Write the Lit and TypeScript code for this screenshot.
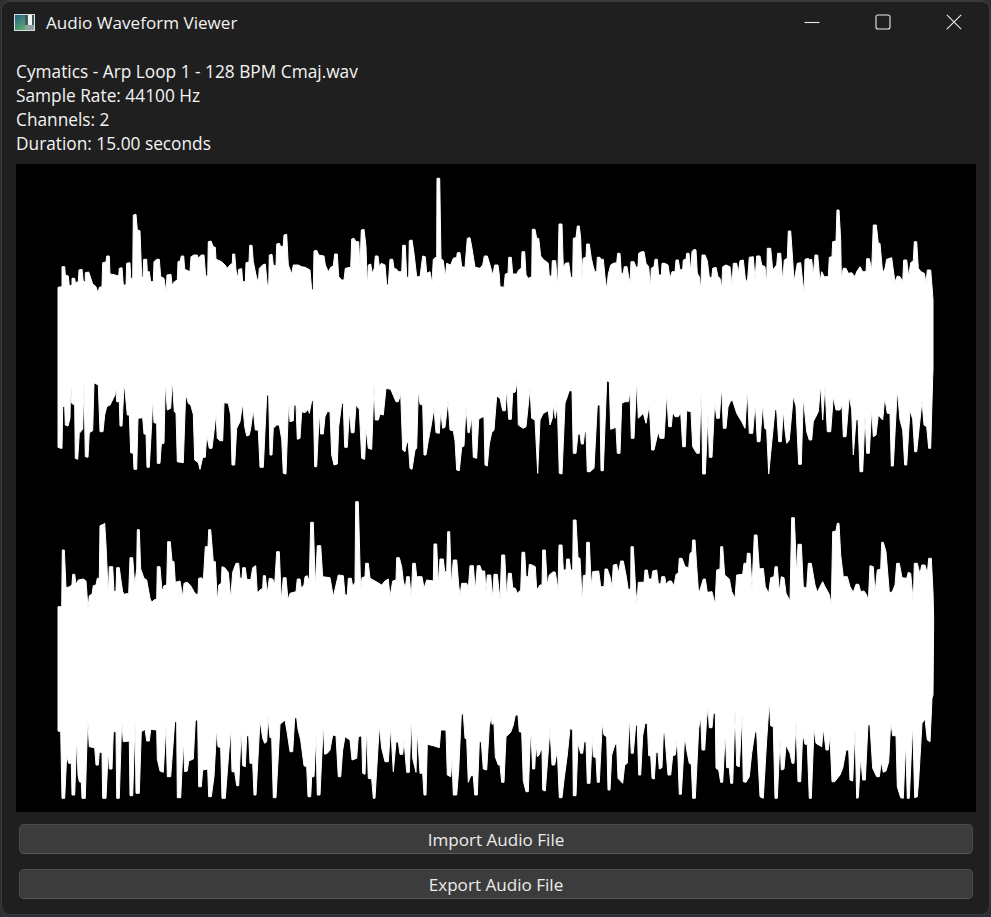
import { LitElement, css, html, svg } from 'lit';
import { customElement } from 'lit/decorators.js';

// envelope traces, in 3x coordinates relative to the crop origin given in build()
const CH1_TOP_A =
  '54,390 54,352 66,350 66,290 74,290 76,315 85,318 88,348 96,345 96,325 104,325 106,338 115,335 117,300 126,298 130,335 136,335 136,308 146,306 158,342 168,350 174,370 178,352 186,350 188,278 198,276 200,258 208,258 210,312 222,314 236,318 238,295 246,293 250,345 258,345 260,280 270,278 272,325 278,325 280,135 288,133 292,180 300,182 305,320 309,322 311,268 320,268 322,305 328,305 332,335 340,335 342,275 350,268 358,268 362,320 372,325 378,366 381,315 393,313 396,345 403,335 412,330 414,275 421,272 424,258 431,258 434,298 450,305 453,260 462,255 472,255 475,265 484,255 492,255 497,318 503,318 505,215 513,213 520,230 526,232 528,268 545,275 555,285 562,295 570,285 577,280 578,252 584,252 588,300 593,325 596,298 605,296 608,335 616,335 618,278 627,276 629,226 636,226 640,275 648,315 655,340 658,295 668,285 676,282 682,345 686,345 688,255 696,253 700,285 708,288 710,222 718,220 722,230 730,228 732,195 740,193 745,285 755,312 760,285 775,285 785,290 795,292 810,300 815,360 820,360 822,243 830,241 836,255 852,258 856,285 865,305 872,292 880,288 884,252 892,252 896,320 905,330 912,330 916,295 932,292 935,207 942,205 948,215 956,215 960,290 964,180 972,178 978,230 982,355 985,285 992,282 997,310 1003,295 1006,258 1014,258 1018,290 1024,280 1035,285 1040,345 1045,345 1050,268 1058,268 1062,295 1070,298 1076,305 1085,305 1088,226 1096,226 1100,322 1106,322 1108,212 1116,210 1122,250 1130,320 1140,320 1148,258 1156,260 1160,310 1170,305 1176,340 1180,268 1190,260 1191,25 1199,25 1203,265 1210,272 1216,322 1220,280 1232,285 1240,265 1250,262 1252,248 1260,248 1265,290 1275,292 1282,205 1290,203 1296,235 1305,292 1320,295 1328,285 1333,258 1342,258 1350,285 1358,315 1364,285 1374,285 1378,315';
const CH1_TOP_B =
  '30,350 42,352 46,312 54,310 56,262 64,262 68,312 80,312 86,300 94,295 96,245 104,245 108,315 115,325 125,320 127,178 135,178 140,205 146,205 152,258 160,268 175,280 178,318 185,318 187,272 197,272 203,352 207,162 216,162 220,295 226,280 236,278 242,322 248,322 250,205 258,203 262,168 268,168 272,205 276,325 279,265 288,262 290,222 298,222 304,265 310,290 314,305 320,305 322,262 330,262 332,268 340,268 345,320 350,358 355,312 362,285 370,280 380,278 383,250 390,250 394,310 400,310 403,290 411,290 416,320 420,338 423,275 432,275 438,292 444,290 446,250 455,245 462,245 468,280 476,290 481,355 484,295 492,290 495,268 502,268 506,315 514,315 516,280 524,280 534,285 540,325 546,305 555,305 558,270 565,270 570,300 578,298 580,270 588,268 590,250 597,250 602,305 606,245 612,238 618,240 622,310 628,320 632,360 636,255 645,255 652,272 658,320 665,325 668,295 678,292 684,320 690,325 695,355 698,290 708,285 720,290 726,345 730,280 740,280 745,308 750,272 760,270 766,325 772,340 778,262 790,260 795,330 800,258 810,258 815,285 825,290 830,342 832,235 842,235 848,300 860,285 863,250 872,250 878,335 883,270 892,265 895,183 902,183 908,270 912,335 922,280 932,278 938,335 942,368 945,268 955,265 958,270 965,268 970,315 975,255 983,255 990,335 995,305 1003,320 1015,320 1018,262 1026,260 1028,215 1038,213 1041,120 1047,120 1052,210 1054,322 1060,295 1068,295 1075,310 1085,308 1095,320 1100,305 1110,290 1118,305 1128,305 1130,266 1138,266 1145,300 1150,165 1159,165 1165,220 1170,220 1178,310 1185,295 1190,268 1205,263 1210,300 1215,335 1222,318 1230,320 1238,335 1241,270 1250,270 1256,320 1262,278 1270,272 1273,215 1280,215 1285,295 1293,305 1303,310 1308,338 1312,300 1322,300 1327,360 1329,390';
const CH1_BOT_A =
  '54,0 54,232 62,235 66,235 68,110 74,108 76,165 84,168 90,145 92,28 95,100 104,105 106,265 113,268 118,190 128,178 132,35 136,260 144,262 148,188 158,182 162,38 175,45 180,185 189,185 194,135 200,110 210,105 225,75 227,45 230,95 238,95 240,168 246,168 252,45 255,60 262,135 268,135 272,248 280,250 282,298 290,298 294,145 308,143 312,192 318,192 321,292 328,292 335,160 338,82 342,158 350,160 352,280 360,280 364,222 372,220 376,35 382,120 392,115 397,28 403,125 408,128 412,275 430,278 437,70 445,100 452,105 460,133 464,270 475,278 480,298 488,262 496,262 500,195 508,235 516,235 522,185 528,130 532,205 540,212 548,212 552,98 565,100 572,135 576,285 584,285 590,175 600,155 608,100 614,170 620,198 628,195 632,175 640,118 646,180 655,180 660,292 670,292 680,75 686,75 690,255 696,255 700,175 710,165 718,165 725,208 730,310 738,312 746,90 750,155 760,152 762,105 768,105 772,208 780,205 785,125 795,128 805,118 808,130 815,92 820,92 824,290 830,290 838,125 842,192 850,192 855,140 862,125 870,125 875,255 882,285 892,282 896,170 905,100 910,100 914,232 922,232 928,125 934,188 942,188 948,105 958,118 965,265 974,268 978,175 985,235 995,238 1002,42 1006,150 1015,150 1020,132 1030,135 1038,55 1052,58 1068,95 1075,95 1082,72 1088,240 1095,245 1100,218 1105,218 1110,295 1116,298 1125,240 1130,235 1135,58 1140,103 1148,105 1152,255 1158,255 1165,212 1172,175 1182,115 1188,188 1198,190 1202,122 1208,175 1215,172 1224,92 1230,180 1240,182 1245,212 1250,300 1258,302 1265,232 1272,228 1278,108 1284,188 1288,188 1295,140 1300,262 1310,265 1316,148 1325,142 1332,140 1335,285 1342,288 1348,222 1355,188 1362,180 1370,78';
const CH1_BOT_B =
  '30,85 38,122 46,122 50,55 56,148 64,148 68,68 76,66 82,32 85,165 100,175 108,170 120,55 125,145 135,150 143,310 150,150 160,130 175,122 180,165 187,145 190,105 196,145 202,100 208,310 216,312 225,100 238,62 246,62 250,250 258,250 264,192 270,192 274,222 280,222 284,185 288,185 292,305 300,305 312,295 322,105 330,105 333,302 340,302 350,32 358,35 362,178 378,172 382,250 390,250 395,100 405,95 415,95 420,65 424,205 432,205 440,30 445,145 460,130 468,160 478,105 485,240 492,240 505,185 510,205 522,205 530,70 536,170 544,170 548,125 555,140 565,140 572,128 578,230 586,230 590,122 603,125 608,230 620,250 628,250 634,42 638,312 646,312 654,130 658,262 666,262 674,95 680,145 688,145 695,48 700,175 708,175 714,112 722,92 728,92 740,130 755,155 765,175 772,55 778,190 788,190 796,98 802,215 810,215 818,102 824,175 830,180 836,312 842,250 855,118 860,120 866,215 874,215 880,120 885,180 890,220 898,210 910,78 918,110 926,283 934,283 940,82 950,185 958,210 965,210 970,155 985,125 992,45 998,150 1005,45 1012,185 1022,185 1030,80 1038,120 1050,120 1056,105 1060,200 1068,200 1078,78 1085,120 1090,255 1098,150 1104,148 1110,305 1118,305 1125,135 1130,250 1138,250 1145,115 1150,200 1158,195 1165,135 1178,150 1184,82 1192,130 1200,130 1204,288 1210,288 1222,58 1230,150 1238,180 1244,285 1250,285 1260,120 1268,148 1274,245 1280,245 1296,92 1302,165 1310,170 1316,235 1322,235 1328,20 1329,0';
const CH2_TOP_A =
  '54,375 54,335 65,335 67,165 73,165 78,278 90,275 96,268 98,238 104,238 108,268 115,255 130,252 138,258 144,340 148,302 156,298 160,272 168,270 172,250 178,250 180,92 190,88 194,85 198,150 205,300 208,215 218,215 222,290 228,288 230,218 238,218 242,250 248,290 252,298 266,295 270,188 278,188 284,270 290,222 292,104 298,104 302,222 312,250 320,255 330,310 335,322 342,315 350,312 352,215 360,215 366,290 372,272 380,270 383,140 391,140 396,198 402,200 406,262 420,258 428,305 432,265 442,262 452,272 462,290 468,298 474,298 476,250 485,248 490,258 496,155 504,155 506,104 512,104 520,200 526,200 532,322 536,270 544,265 546,215 554,218 565,232 572,310 578,232 588,205 596,205 600,250 606,250 608,218 616,218 620,252 632,255 638,218 647,212 652,295 660,285 668,280 670,242 676,242 682,295 688,250 698,252 704,268 710,170 718,170 724,318 730,248 738,248 744,315 750,295 768,290 772,252 780,252 784,280 792,270 795,245 802,242 808,260 812,82 820,82 826,275 832,152 842,152 848,245 870,248 880,305 888,270 895,240 910,242 915,300 922,300 925,250 934,250 938,275 945,262 947,20 955,20 962,285 966,248 975,245 977,205 985,205 990,250 1005,258 1025,270 1035,258 1045,252 1050,305 1058,258 1068,255 1070,188 1078,188 1085,215 1090,258 1096,280 1100,245 1108,245 1114,312 1118,205 1126,205 1130,245 1146,245 1152,280 1160,255 1180,258 1182,147 1190,147 1195,268 1200,192 1210,192 1214,230 1220,230 1223,110 1229,110 1234,270 1240,195 1250,195 1256,270 1260,302 1265,265 1280,265 1285,280 1290,212 1300,212 1306,285 1312,212 1320,212 1325,228 1334,228 1338,290 1342,240 1352,240 1358,310 1362,238 1372,238';
const CH2_TOP_B =
  '30,315 35,180 44,180 50,310 55,235 64,235 68,278 76,280 82,295 92,285 96,172 104,172 108,245 115,245 118,208 126,210 136,215 140,285 150,270 156,270 158,165 166,165 172,270 178,240 190,230 196,232 204,285 207,150 216,150 220,225 228,225 230,192 238,192 242,225 248,225 250,75 258,75 264,188 270,190 277,325 280,242 288,240 290,142 298,142 304,275 308,230 326,228 332,275 342,275 345,222 352,222 360,245 366,275 370,210 380,208 385,235 392,198 400,198 408,240 415,285 422,280 423,155 430,155 437,285 441,325 445,262 462,262 465,225 472,225 476,252 485,252 488,228 500,225 505,265 512,268 515,245 524,245 528,268 536,258 544,258 552,272 558,238 565,235 568,190 576,190 585,215 596,218 600,175 606,172 608,135 615,135 620,215 626,298 640,252 646,252 652,292 666,290 675,328 680,225 690,222 692,155 698,155 704,240 718,252 725,290 735,310 740,240 758,238 762,205 770,205 772,175 780,175 786,280 793,120 801,120 808,222 820,220 826,275 836,295 842,248 852,245 855,215 862,215 868,290 874,245 882,248 888,295 900,318 905,68 913,68 920,240 924,148 934,148 940,275 950,280 955,205 964,205 975,270 982,292 990,275 998,260 1005,275 1018,298 1024,330 1028,110 1038,108 1042,85 1047,85 1052,180 1060,245 1072,245 1080,275 1090,292 1098,268 1106,268 1112,290 1122,288 1130,300 1135,320 1140,212 1150,215 1155,295 1162,225 1172,222 1175,142 1180,142 1188,170 1198,292 1206,292 1215,270 1220,205 1228,205 1236,248 1250,250 1255,232 1262,235 1270,322 1273,205 1282,205 1290,238 1295,210 1305,210 1312,235 1316,190 1324,190 1329,290 1331,375';
const CH2_BOT_A =
  '54,0 54,108 62,110 66,310 74,310 80,182 86,205 94,205 96,300 104,300 110,125 114,240 118,260 124,262 126,310 136,310 143,68 148,155 164,158 168,210 175,210 178,172 186,172 188,310 198,310 205,165 208,222 216,222 220,110 228,110 230,310 238,310 245,75 250,140 268,138 270,302 278,302 285,80 288,295 298,295 304,110 315,103 320,138 328,138 332,103 350,105 352,192 360,228 370,232 378,88 382,245 392,245 404,80 410,80 412,308 422,308 430,135 434,230 442,228 446,198 460,192 466,75 473,75 476,275 484,275 488,225 503,222 506,305 514,305 522,245 530,98 534,155 542,158 546,310 556,310 572,98 576,230 584,230 590,272 596,272 604,102 608,212 616,215 620,122 626,122 630,205 638,205 642,300 648,300 660,75 668,130 674,145 680,140 684,65 690,128 695,128 700,308 708,308 720,88 735,75 742,115 750,170 758,170 764,68 770,68 774,102 782,135 792,212 800,215 804,305 812,305 815,245 822,245 828,120 832,300 840,300 850,85 854,178 862,175 870,165 878,120 888,122 895,245 902,245 908,165 915,125 930,135 936,195 950,190 955,125 965,122 968,235 975,238 980,100 985,250 995,252 1000,310 1005,310 1018,92 1025,160 1035,200 1045,200 1052,95 1060,230 1068,140 1075,142 1080,178 1088,178 1092,135 1100,232 1108,232 1114,62 1118,190 1128,232 1132,105 1140,235 1148,235 1152,300 1158,300 1162,148 1180,152 1198,158 1202,105 1218,105 1222,240 1232,245 1236,190 1240,300 1250,300 1256,225 1264,60 1270,55 1275,130 1280,132 1285,262 1292,242 1300,242 1304,300 1312,300 1318,140 1324,140 1330,222 1340,225 1348,95 1354,62 1356,88 1362,85 1366,185 1375,210';
const CH2_BOT_B =
  '30,210 35,262 42,262 48,125 62,112 70,90 76,60 84,60 88,110 95,112 100,258 108,290 115,290 122,98 128,222 134,222 138,140 142,185 148,180 152,165 156,165 158,285 166,288 180,100 186,210 194,210 202,165 208,308 216,308 222,255 232,180 240,100 248,105 250,302 258,302 264,145 272,175 278,175 282,140 288,140 292,265 300,265 307,125 310,185 318,188 322,262 328,262 337,85 342,120 350,125 354,285 360,285 365,180 375,148 380,148 384,250 398,265 404,210 412,205 418,65 424,175 430,175 437,90 442,90 446,240 452,240 458,122 465,85 472,85 476,182 482,182 486,250 493,252 498,172 504,172 508,222 516,218 520,115 524,115 534,240 542,240 548,182 556,180 562,132 568,298 574,298 584,122 590,165 598,205 604,208 608,310 616,310 626,100 632,65 636,165 644,165 650,70 654,38 658,98 666,98 670,55 676,55 678,220 686,225 692,262 698,262 706,112 710,218 718,218 722,265 728,265 735,45 740,212 748,215 756,58 760,260 768,262 778,245 785,175 795,110 800,112 810,305 820,310 830,135 838,18 842,92 850,95 855,310 862,310 870,135 874,225 882,222 888,150 900,175 906,205 912,205 918,78 924,260 932,260 938,115 945,148 952,148 958,310 964,310 972,100 978,145 995,155 1000,100 1008,165 1015,165 1020,122 1026,260 1034,260 1050,240 1058,220 1068,165 1076,165 1080,255 1088,258 1095,100 1100,310 1105,308 1112,185 1118,255 1126,255 1134,88 1140,90 1148,220 1160,245 1168,245 1174,200 1180,232 1188,228 1196,200 1202,80 1208,122 1218,122 1222,275 1232,308 1240,310 1247,140 1252,310 1258,310 1268,85 1274,308 1282,305 1286,255 1296,85 1305,72 1312,135 1320,140 1326,10 1329,0';

function trace(raw: string, x0: number, y0: number) {
  return raw.split(' ').map(p => {
    const [x, y] = p.split(',').map(Number);
    return `${(x0 + x / 3).toFixed(1)},${(y0 + y / 3).toFixed(1)}`;
  });
}

function channel(topA: string, topB: string, botA: string, botB: string, yTop: number, yBot: number) {
  const top = [...trace(topA, 40, yTop), ...trace(topB, 490, yTop)];
  const bottom = [...trace(botA, 40, yBot), ...trace(botB, 490, yBot)];
  return [...top, ...bottom.reverse()].join(' ');
}

const CHANNELS = [
  channel(CH1_TOP_A, CH1_TOP_B, CH1_BOT_A, CH1_BOT_B, 170, 370),
  channel(CH2_TOP_A, CH2_TOP_B, CH2_BOT_A, CH2_BOT_B, 495, 695),
];

@customElement('app-root')
export class AppRoot extends LitElement {
  static styles = css`
    :host {
      display: block;
      width: 991px;
      height: 917px;
      background: #2b3036;
      font-family: 'Open Sans', 'Noto Sans', sans-serif;
      overflow: hidden;
    }
    .window {
      box-sizing: border-box;
      display: flex;
      flex-direction: column;
      width: 989px;
      height: 915px;
      margin-left: 1px;
      background: #1f1f1f;
      border: 1px solid #3a3a3a;
      border-top-width: 2px;
      border-radius: 9px;
    }
    .titlebar {
      display: flex;
      align-items: center;
      height: 40px;
      flex: none;
      color: #f2f2f2;
      font-size: 17.1px;
      padding-left: 12px;
    }
    .app-icon {
      width: 21px;
      height: 17px;
      margin-right: 11px;
      flex: none;
    }
    .caption {
      flex: 1;
    }
    .controls {
      display: flex;
    }
    .control {
      display: flex;
      align-items: center;
      justify-content: center;
      width: 71px;
      height: 40px;
    }
    .control svg {
      width: 16px;
      height: 16px;
      fill: none;
      stroke: #ededed;
      stroke-width: 1.1;
    }
    .info {
      margin-top: 18px;
      padding-left: 14px;
      color: #f4f4f4;
      font-size: 17.3px;
      line-height: 24px;
      white-space: pre;
    }
    .plot {
      display: block;
      width: 960px;
      height: 648px;
      margin: 8px 0 0 14px;
      background: #000;
      flex: none;
    }
    .plot polygon {
      fill: #fff;
      stroke: #fff;
      stroke-width: 1;
      stroke-linejoin: round;
    }
    .actions {
      display: flex;
      flex-direction: column;
      gap: 15px;
      margin: 12px 0 0 17px;
      width: 954px;
    }
    button {
      box-sizing: border-box;
      height: 30px;
      padding: 0;
      background: #3c3c3c;
      border: 1px solid #4a4a4a;
      border-bottom-color: #5a5a5a;
      border-radius: 5px;
      color: #ececec;
      font: inherit;
      font-size: 17.1px;
    }
  `;

  render() {
    return html`
      <div class="window">
        <div class="titlebar">
          <svg class="app-icon" viewBox="0 0 21 17">
            <defs>
              <linearGradient id="ico" x1="0" y1="0" x2="0.5" y2="1">
                <stop offset="0" stop-color="#23628a" />
                <stop offset="1" stop-color="#55a56c" />
              </linearGradient>
            </defs>
            <rect width="21" height="17" fill="#d9dee0" />
            <rect x="1" y="1" width="10" height="15" fill="url(#ico)" />
            <rect x="11" y="1" width="9" height="15" fill="#47565c" />
            <rect x="14" y="1" width="4" height="10" fill="#f1f4f4" />
            <rect x="11" y="11" width="9" height="5" fill="#8fa3a0" />
          </svg>
          <span class="caption">Audio Waveform Viewer</span>
          <div class="controls">
            <div class="control">
              <svg viewBox="0 0 16 16"><path d="M0.5 8.5H15.5" /></svg>
            </div>
            <div class="control">
              <svg viewBox="0 0 16 16"><rect x="1" y="1" width="14" height="14" rx="2" /></svg>
            </div>
            <div class="control">
              <svg viewBox="0 0 16 16"><path d="M0.8 0.8L15.2 15.2M15.2 0.8L0.8 15.2" /></svg>
            </div>
          </div>
        </div>
        <div class="info">Cymatics - Arp Loop 1 - 128 BPM Cmaj.wav
Sample Rate: 44100 Hz
Channels: 2
Duration: 15.00 seconds</div>
        <svg class="plot" viewBox="16 164 960 648">
          ${CHANNELS.map(points => svg`<polygon points=${points}></polygon>`)}
        </svg>
        <div class="actions">
          <button>Import Audio File</button>
          <button>Export Audio File</button>
        </div>
      </div>
    `;
  }
}
